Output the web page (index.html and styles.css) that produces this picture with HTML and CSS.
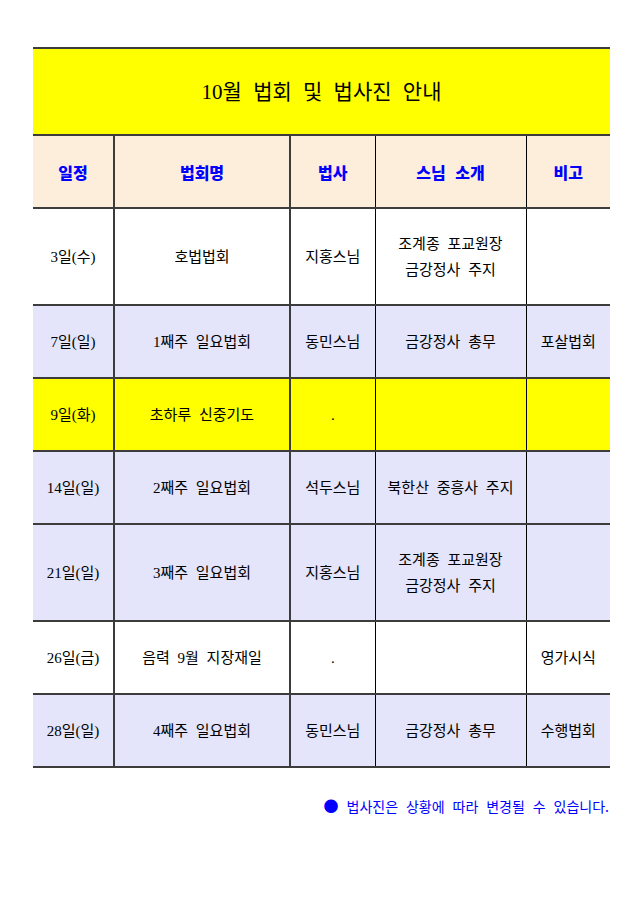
FILE: index.html
```html
<!DOCTYPE html>
<html lang="ko">
<head>
<meta charset="utf-8">
<title>10월 법회 및 법사진 안내</title>
<link rel="stylesheet" href="styles.css">
</head>
<body>
<div class="page">
  <table class="sched">
    <colgroup>
      <col class="c1"><col class="c2"><col class="c3"><col class="c4"><col class="c5">
    </colgroup>
    <tr class="title-row"><td colspan="5" class="title">10월 법회 및 법사진 안내</td></tr>
    <tr class="head-row">
      <th class="b2">일정</th><th class="b2">법회명</th><th class="b1">법사</th><th class="b1">스님 소개</th><th>비고</th>
    </tr>
    <tr class="tall white">
      <td class="b2 num">3일(수)</td><td class="b2">호법법회</td><td class="b1">지홍스님</td><td class="b1">조계종 포교원장<br>금강정사 주지</td><td></td>
    </tr>
    <tr class="short lav">
      <td class="b2 num">7일(일)</td><td class="b2">1째주 일요법회</td><td class="b1">동민스님</td><td class="b1">금강정사 총무</td><td>포살법회</td>
    </tr>
    <tr class="short yel">
      <td class="b2 num">9일(화)</td><td class="b2">초하루 신중기도</td><td class="b1">.</td><td class="b1"></td><td></td>
    </tr>
    <tr class="short lav">
      <td class="b2 num">14일(일)</td><td class="b2">2째주 일요법회</td><td class="b1">석두스님</td><td class="b1">북한산 중흥사 주지</td><td></td>
    </tr>
    <tr class="tall lav">
      <td class="b2 num">21일(일)</td><td class="b2">3째주 일요법회</td><td class="b1">지홍스님</td><td class="b1">조계종 포교원장<br>금강정사 주지</td><td></td>
    </tr>
    <tr class="short white">
      <td class="b2 num">26일(금)</td><td class="b2">음력 9월 지장재일</td><td class="b1">.</td><td class="b1"></td><td>영가시식</td>
    </tr>
    <tr class="short lav last">
      <td class="b2 num">28일(일)</td><td class="b2">4째주 일요법회</td><td class="b1">동민스님</td><td class="b1">금강정사 총무</td><td>수행법회</td>
    </tr>
  </table>
  <p class="note"><span class="dot">●</span> 법사진은 상황에 따라 변경될 수 있습니다.</p>
</div>
</body>
</html>
```
FILE: styles.css
```css
html, body {
  margin: 0;
  padding: 0;
  background: #ffffff;
}
.page {
  padding-top: 47px;
  padding-left: 33px;
  width: 577px;
}
.sched {
  width: 577px;
  border-collapse: collapse;
  table-layout: fixed;
  font-family: "Liberation Serif", "Noto Sans CJK KR", serif;
  font-size: 15px;
  color: #000;
}
.c1 { width: 81px; }
.c2 { width: 176px; }
.c3 { width: 85px; }
.c4 { width: 151px; }
.c5 { width: 84px; }
.sched td, .sched th {
  padding: 0;
  text-align: center;
  vertical-align: middle;
  border-bottom: 2px solid #3c3c3c;
  word-spacing: 4px;
  line-height: 26px;
}
.sched .b2 { border-right: 2px solid #3c3c3c; }
.sched .b1 { border-right: 1px solid #000; }
.title-row td {
  border-top: 2px solid #3c3c3c;
  background: #ffff00;
  height: 85px;
  font-size: 21px;
  word-spacing: 6px;
}
.head-row th {
  background: #fdeedb;
  height: 71px;
  font-family: "Noto Sans CJK KR", sans-serif;
  font-weight: 900;
  color: #0000ff;
  font-size: 16px;
  word-spacing: 5px;
}
.tall td { height: 95px; }
.short td { height: 71px; }
.white td { background: #ffffff; }
.lav td { background: #e4e4fa; }
.yel td { background: #ffff00; }
.note {
  margin: 27px 0 0;
  text-align: right;
  padding-right: 1px;
  font-family: "Noto Sans CJK KR", sans-serif;
  font-size: 14px;
  color: #0000ff;
  word-spacing: 4px;
}
.dot { font-size: 15px; }
```
